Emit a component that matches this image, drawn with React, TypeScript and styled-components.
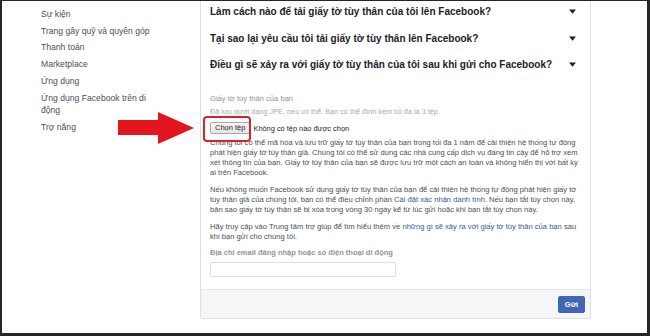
import React from "react";
import styled, { createGlobalStyle } from "styled-components";

const GlobalStyle = createGlobalStyle`
  html, body {
    margin: 0;
    padding: 0;
    background: #ffffff;
  }
  * {
    box-sizing: border-box;
  }
`;

const navItems = [
  "Sự kiện",
  "Trang gây quỹ và quyên góp",
  "Thanh toán",
  "Marketplace",
  "Ứng dụng",
  "Ứng dụng Facebook trên di động",
  "Trợ năng",
];

const questions = [
  "Làm cách nào để tải giấy tờ tùy thân của tôi lên Facebook?",
  "Tại sao lại yêu cầu tôi tải giấy tờ tùy thân lên Facebook?",
  "Điều gì sẽ xảy ra với giấy tờ tùy thân của tôi sau khi gửi cho Facebook?",
];

const Caret = () => (
  <svg width="7" height="5" viewBox="0 0 7 5">
    <path d="M0 0.5 L7 0.5 L3.5 4.8 Z" fill="#1d2129" />
  </svg>
);

const RedArrow = () => (
  <ArrowMark width="78" height="34" viewBox="0 0 78 34">
    <path d="M0 8 L40 8 L40 0 L76 16 L40 32 L40 23 L0 23 Z" fill="#e3161e" />
  </ArrowMark>
);

const App = () => {
  return (
    <>
      <GlobalStyle />
      <Frame>
        <Nav>
          {navItems.map((item) => (
            <NavItem key={item}>{item}</NavItem>
          ))}
        </Nav>

        <Card>
          <QuestionList>
            {questions.map((q) => (
              <Question key={q}>
                <span>{q}</span>
                <Caret />
              </Question>
            ))}
          </QuestionList>

          <FormBody>
            <FieldLabel>Giấy tờ tùy thân của bạn</FieldLabel>
            <Hint>
              Đã lưu dưới dạng JPE, nếu có thể. Bạn có thể đính kèm tối đa là 3
              tệp.
            </Hint>
            <FileRow>
              <FileButton>Chọn tệp</FileButton>
              <FileStatus>Không có tệp nào được chọn</FileStatus>
            </FileRow>

            <Paragraph>
              Chúng tôi có thể mã hóa và lưu trữ giấy tờ tùy thân của bạn trong
              tối đa 1 năm để cải thiện hệ thống tự động phát hiện giấy tờ tùy
              thân giả. Chúng tôi có thể sử dụng các nhà cung cấp dịch vụ đáng
              tin cậy để hỗ trợ xem xét thông tin của bạn. Giấy tờ tùy thân của
              bạn sẽ được lưu trữ một cách an toàn và không hiển thị với bất kỳ
              ai trên Facebook.
            </Paragraph>
            <Paragraph>
              Nếu không muốn Facebook sử dụng giấy tờ tùy thân của bạn để cải
              thiện hệ thống tự động phát hiện giấy tờ tùy thân giả của chúng
              tôi, bạn có thể điều chỉnh phần{" "}
              <Link>Cài đặt xác nhận danh tính</Link>. Nếu bạn tắt tùy chọn này,
              bản sao giấy tờ tùy thân sẽ bị xóa trong vòng 30 ngày kể từ lúc
              gửi hoặc khi bạn tắt tùy chọn này.
            </Paragraph>
            <Paragraph>
              Hãy truy cập vào Trung tâm trợ giúp để tìm hiểu thêm về{" "}
              <Link>những gì sẽ xảy ra với giấy tờ tùy thân của bạn</Link> sau
              khi bạn gửi cho chúng tôi.
            </Paragraph>

            <EmailLabel>Địa chỉ email đăng nhập hoặc số điện thoại di động</EmailLabel>
            <TextInput type="text" />
          </FormBody>

          <Footer>
            <SubmitButton>Gửi</SubmitButton>
          </Footer>
        </Card>

        <RedArrow />
        <Highlight />
      </Frame>
    </>
  );
};

const Frame = styled.div`
  position: relative;
  width: 650px;
  height: 336px;
  overflow: hidden;
  display: flex;
  align-items: flex-start;
  background: #ffffff;
  border-style: solid;
  border-color: #262626;
  border-width: 1px 3px 3px 2px;
  font-family: "Liberation Sans", Arial, sans-serif;
`;

const Nav = styled.nav`
  width: 198px;
  flex: none;
  padding: 7px 0 0 39px;
  display: flex;
  flex-direction: column;
  gap: 4px;
`;

const NavItem = styled.div`
  width: 116px;
  font-size: 8.6px;
  line-height: 12.7px;
  color: #4b4f56;
`;

const Card = styled.section`
  width: 391px;
  flex: none;
  margin-top: -3px;
  border: 1px solid #dddfe2;
  border-top: none;
  border-radius: 0 0 3px 3px;
  background: #ffffff;
`;

const QuestionList = styled.div`
  display: flex;
  flex-direction: column;
`;

const Question = styled.div`
  height: 26.7px;
  display: flex;
  align-items: center;
  justify-content: space-between;
  padding: 0 14px 0 9px;
  font-size: 10px;
  font-weight: 700;
  color: #1d2129;
`;

const FormBody = styled.div`
  padding: 16px 10px 12px 9px;
  display: flex;
  flex-direction: column;
  align-items: flex-start;
`;

const FieldLabel = styled.div`
  font-size: 7.6px;
  line-height: 10px;
  color: #90949c;
`;

const Hint = styled.div`
  margin-top: 3px;
  font-size: 7.3px;
  line-height: 10px;
  color: #a7abb1;
`;

const FileRow = styled.div`
  margin-top: 5px;
  display: flex;
  align-items: center;
  gap: 3px;
`;

const FileButton = styled.button`
  height: 12px;
  padding: 0 4px;
  font-family: "Liberation Sans", Arial, sans-serif;
  font-size: 7.5px;
  line-height: 10px;
  color: #1d2129;
  background: linear-gradient(#f8f8f8, #e4e4e4);
  border: 1px solid #a9a9a9;
  border-radius: 2px;
`;

const FileStatus = styled.span`
  font-size: 7.4px;
  color: #1d2129;
`;

const Paragraph = styled.p`
  margin: 4px 0 0;
  font-size: 7.6px;
  line-height: 10px;
  color: #4b4f56;

  & + & {
    margin-top: 7px;
  }
`;

const Link = styled.span`
  color: #365899;
`;

const EmailLabel = styled.div`
  margin-top: 6px;
  font-size: 7.5px;
  font-weight: 700;
  line-height: 10px;
  color: #90949c;
`;

const TextInput = styled.input`
  margin-top: 4px;
  width: 186px;
  height: 15px;
  border: 1px solid #dddfe2;
  border-radius: 1px;
  outline: none;
`;

const Footer = styled.div`
  height: 29px;
  display: flex;
  align-items: center;
  justify-content: flex-end;
  padding: 0 5px;
  background: #f5f6f7;
  border-top: 1px solid #e5e6e9;
`;

const SubmitButton = styled.button`
  width: 27px;
  height: 17px;
  padding: 0;
  font-family: "Liberation Sans", Arial, sans-serif;
  font-size: 7.5px;
  font-weight: 700;
  color: #ffffff;
  background: #4267b2;
  border: 1px solid #4267b2;
  border-radius: 2px;
`;

const ArrowMark = styled.svg`
  position: absolute;
  left: 116px;
  top: 111px;
`;

const Highlight = styled.div`
  position: absolute;
  left: 201px;
  top: 115px;
  width: 48px;
  height: 26px;
  border: 2px solid #d8232a;
  border-radius: 4px;
`;

export default App;
